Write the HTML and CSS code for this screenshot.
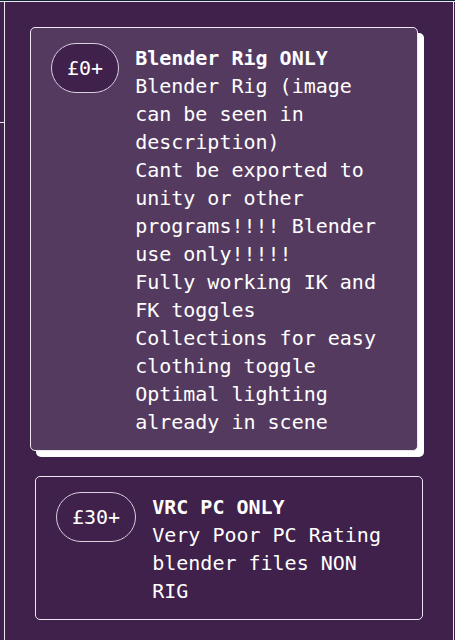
FILE: index.html
```html
<!DOCTYPE html>
<html lang="en">
  <head>
    <meta charset="UTF-8" />
    <meta name="viewport" content="width=device-width, initial-scale=1.0" />
    <title>Tiers</title>
    <link rel="stylesheet" href="styles.css">
  </head>
  <body>
    <div class="topbar"></div>
    <div class="layout">
      <div class="gutter">
        <div class="gutter-top"></div>
      </div>

      <div class="panel">
        <div class="tier active">
          <div class="price">£0+</div>
          <div class="info">
            <div class="name">Blender Rig ONLY</div>
            <div class="desc">
              Blender Rig (image can be seen in description)<br>
              Cant be exported to unity or other programs!!!! Blender use only!!!!!<br>
              Fully working IK and FK toggles<br>
              Collections for easy clothing toggle<br>
              Optimal lighting already in scene
            </div>
          </div>
        </div>

        <div class="tier">
          <div class="price">£30+</div>
          <div class="info">
            <div class="name">VRC PC ONLY</div>
            <div class="desc">Very Poor PC Rating blender files NON RIG</div>
          </div>
        </div>
      </div>
    </div>
  </body>
</html>
```

FILE: styles.css
```css
* {
  box-sizing: border-box;
}

body {
  margin: 0;
  background: #3f214b;
  color: #fff;
  font-family: "DejaVu Sans Mono", "Liberation Mono", monospace;
  font-size: 20px;
  line-height: 28px;
  overflow: hidden;
}

.topbar {
  height: 2px;
  background: #0f2536;
  border-bottom: 1px solid #ece6ef;
}

.layout {
  display: flex;
}

.gutter {
  width: 4px;
  flex-shrink: 0;
}

.gutter-top {
  height: 121px;
  border-bottom: 1px solid #ece6ef;
}

.panel {
  flex: 1;
  margin-right: 1px;
  min-height: calc(100vh - 2px);
  padding: 30px 30px;
  border-left: 1px solid #ece6ef;
  border-right: 1px solid #ece6ef;
  display: flex;
  flex-direction: column;
  gap: 20px;
}

.tier {
  display: flex;
  align-items: flex-start;
  gap: 16px;
  padding: 15px 20px 14px;
  border: 1px solid #ece6ef;
  border-radius: 5px;
  cursor: pointer;
}

.tier.active {
  background: #553a5f;
  transform: translate(-5px, -5px);
  box-shadow: 6px 6px 0 #fff;
}

.price {
  flex-shrink: 0;
  padding: 10px 15px;
  border: 1px solid #d9cfdd;
  border-radius: 25px;
  background: #3f214b;
}

.info {
  flex: 1;
  min-width: 0;
  padding-top: 1px;
}

.name {
  font-weight: bold;
}
```
